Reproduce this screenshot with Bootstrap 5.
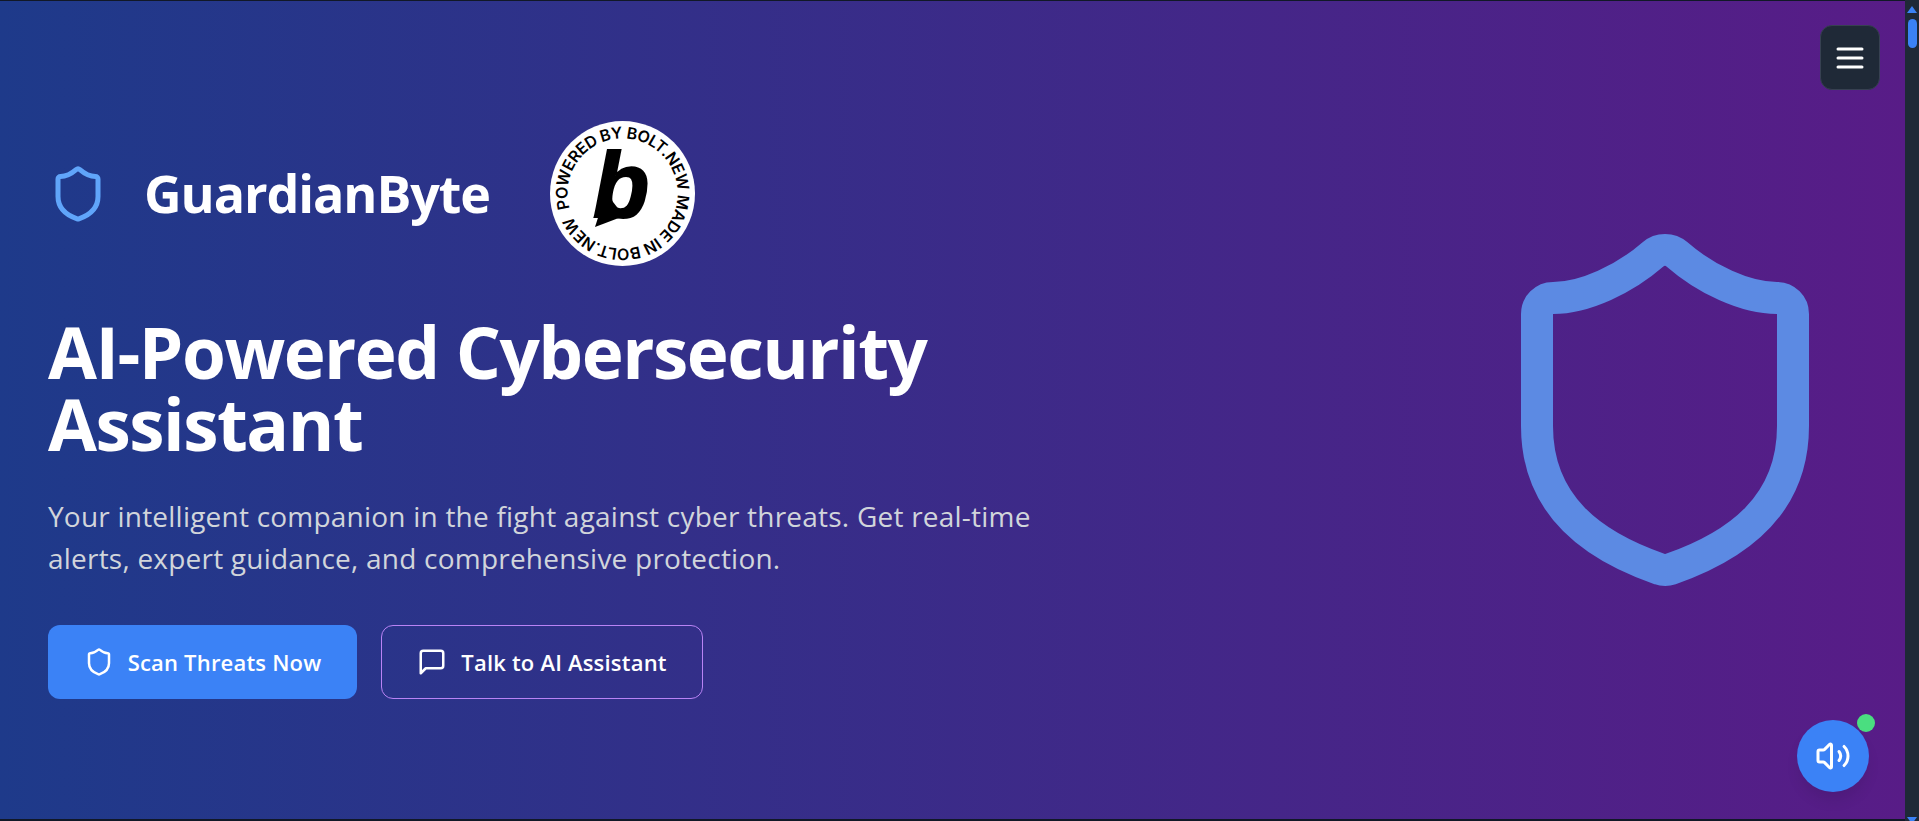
<!DOCTYPE html>
<html lang="en">
<head>
  <meta charset="UTF-8">
  <meta name="viewport" content="width=device-width, initial-scale=1">
  <title>GuardianByte</title>
  <link href="https://cdn.jsdelivr.net/npm/bootstrap@5.3.0/dist/css/bootstrap.min.css" rel="stylesheet">
  <style>
    body {
      font-family: "Open Sans", "Noto Sans", sans-serif;
      background-color: #111827;
      height: 821px;
      overflow: hidden;
      padding: 1px 0 2px;
    }
    .hero {
      background: linear-gradient(to right, #1e3a8a, #581c87);
      color: #fff;
      padding-left: 48px;
      padding-right: 48px;
    }
    .hero-copy { width: 1010px; }
    .logo-shield { width: 60px; height: 60px; color: #60a5fa; }
    .brand-name {
      font-size: 52px;
      font-weight: 700;
      letter-spacing: -1.1px;
      margin: 0 0 0 36px;
    }
    .bolt-badge { width: 145px; height: 145px; margin-left: 60px; }
    .bolt-badge .ring { font-family: Inter, "Liberation Sans", sans-serif; font-size: 16px; font-weight: 600; }
    .bolt-badge .mark { font-family: "Liberation Sans", sans-serif; font-size: 92px; font-weight: 700; font-style: italic; }
    .hero-title {
      font-size: 71px;
      line-height: 72px;
      font-weight: 700;
      letter-spacing: -1.5px;
      margin: 50px 0 35px;
    }
    .hero-text {
      font-size: 28px;
      line-height: 42px;
      letter-spacing: .22px;
      color: #d1d5db;
      margin-bottom: 46px;
    }
    .btn-scan, .btn-talk {
      height: 74px;
      border-radius: 12px;
      font-size: 22px;
      font-weight: 600;
      letter-spacing: .2px;
      color: #fff;
      gap: 14px;
    }
    .btn-scan { width: 309px; background-color: #3b82f6; border: 0; }
    .btn-talk { width: 322px; background-color: transparent; border: 1px solid #b983f5; }
    .btn-scan:hover { background-color: #2563eb; color: #fff; }
    .btn-talk:hover { background-color: rgba(168, 85, 247, .2); color: #fff; }
    .btn-scan svg, .btn-talk svg { width: 30px; height: 30px; }
    .big-shield { width: 384px; height: 384px; color: #5c8ae3; }
    .menu-btn {
      position: fixed;
      top: 25px;
      left: 1820px;
      width: 60px;
      height: 65px;
      background-color: #1f2937;
      border: 1px solid #374151;
      border-radius: 12px;
      color: #fff;
    }
    .menu-btn svg { width: 36px; height: 36px; }
    .sound-btn {
      position: fixed;
      left: 1797px;
      top: 720px;
      width: 72px;
      height: 72px;
      background-color: #3b82f6;
      border: 0;
      border-radius: 50%;
      color: #fff;
      box-shadow: 0 10px 15px -3px rgba(0, 0, 0, .1);
    }
    .sound-btn svg { width: 36px; height: 36px; }
    .sound-dot {
      position: absolute;
      top: -6px;
      right: -6px;
      width: 18px;
      height: 18px;
      border-radius: 50%;
      background-color: #4ade80;
    }
    .page-scroll { width: 14px; background-color: #1f2937; margin: -1px 0 -2px; overflow: hidden; }
    .page-scroll .arrow-up { width: 0; height: 0; border: 5px solid transparent; border-top: 0; border-bottom: 7px solid #3b82f6; margin: 6px auto 0; }
    .page-scroll .arrow-down { width: 0; height: 0; flex-shrink: 0; border: 5px solid transparent; border-bottom: 0; border-top: 7px solid #3b82f6; margin: auto auto -3px; }
    .page-scroll .thumb { width: 9px; height: 29px; border-radius: 5px; background-color: #3b82f6; margin: 6px auto 0; }
  </style>
</head>
<body>
  <div class="d-flex h-100">
    <main class="hero flex-grow-1 d-flex align-items-center justify-content-between">
      <div class="hero-copy">
        <div class="d-flex align-items-center">
          <svg class="logo-shield" viewBox="0 0 24 24" fill="none" stroke="currentColor" stroke-width="2" stroke-linecap="round" stroke-linejoin="round"><path d="M20 13c0 5-3.5 7.5-7.66 8.95a1 1 0 0 1-.67-.01C7.5 20.5 4 18 4 13V6a1 1 0 0 1 1-1c2 0 4.5-1.2 6.24-2.72a1.17 1.17 0 0 1 1.52 0C14.51 3.81 17 5 19 5a1 1 0 0 1 1 1z"/></svg>
          <h2 class="brand-name">GuardianByte</h2>
          <svg class="bolt-badge" viewBox="0 0 145 145">
            <circle cx="72.5" cy="72.5" r="72.5" fill="#fff"/>
            <defs><path id="ringPath" d="M19.6 87.7A55 55 0 1 1 125.4 57.3A55 55 0 1 1 19.6 87.7"/></defs>
            <text class="ring" fill="#000" textLength="338"><textPath href="#ringPath">POWERED BY BOLT.NEW MADE IN BOLT.NEW</textPath></text>
            <polygon points="45,106 56,72 74,95" fill="#000"/>
            <text class="mark" x="43" y="96" fill="#000" stroke="#000" stroke-width="2">b</text>
          </svg>
        </div>
        <h1 class="hero-title">AI-Powered Cybersecurity Assistant</h1>
        <p class="hero-text">Your intelligent companion in the fight against cyber threats. Get real-time alerts, expert guidance, and comprehensive protection.</p>
        <div class="d-flex gap-4">
          <a href="#" class="btn btn-scan d-flex align-items-center justify-content-center">
            <svg viewBox="0 0 24 24" fill="none" stroke="currentColor" stroke-width="2" stroke-linecap="round" stroke-linejoin="round"><path d="M20 13c0 5-3.5 7.5-7.66 8.95a1 1 0 0 1-.67-.01C7.5 20.5 4 18 4 13V6a1 1 0 0 1 1-1c2 0 4.5-1.2 6.24-2.72a1.17 1.17 0 0 1 1.52 0C14.51 3.81 17 5 19 5a1 1 0 0 1 1 1z"/></svg>
            Scan Threats Now
          </a>
          <a href="#" class="btn btn-talk d-flex align-items-center justify-content-center">
            <svg viewBox="0 0 24 24" fill="none" stroke="currentColor" stroke-width="2" stroke-linecap="round" stroke-linejoin="round"><path d="M21 15a2 2 0 0 1-2 2H7l-4 4V5a2 2 0 0 1 2-2h14a2 2 0 0 1 2 2z"/></svg>
            Talk to AI Assistant
          </a>
        </div>
      </div>
      <svg class="big-shield" viewBox="0 0 24 24" fill="none" stroke="currentColor" stroke-width="2" stroke-linecap="round" stroke-linejoin="round"><path d="M20 13c0 5-3.5 7.5-7.66 8.95a1 1 0 0 1-.67-.01C7.5 20.5 4 18 4 13V6a1 1 0 0 1 1-1c2 0 4.5-1.2 6.24-2.72a1.17 1.17 0 0 1 1.52 0C14.51 3.81 17 5 19 5a1 1 0 0 1 1 1z"/></svg>
    </main>
    <div class="page-scroll d-flex flex-column flex-shrink-0">
      <div class="arrow-up"></div>
      <div class="thumb"></div>
      <div class="arrow-down"></div>
    </div>
  </div>

  <button class="menu-btn d-flex align-items-center justify-content-center p-0" type="button" aria-label="Menu">
    <svg viewBox="0 0 24 24" fill="none" stroke="currentColor" stroke-width="2" stroke-linecap="round"><path d="M4 6h16M4 12h16M4 18h16"/></svg>
  </button>
  <button class="sound-btn d-flex align-items-center justify-content-center p-0" type="button" aria-label="Sound">
    <svg viewBox="0 0 24 24" fill="none" stroke="currentColor" stroke-width="2" stroke-linecap="round" stroke-linejoin="round"><path d="M11 4.702a.705.705 0 0 0-1.203-.498L6.413 7.587A1.4 1.4 0 0 1 5.416 8H3a1 1 0 0 0-1 1v6a1 1 0 0 0 1 1h2.416a1.4 1.4 0 0 1 .997.413l3.383 3.384A.705.705 0 0 0 11 19.298z"/><path d="M16 9a5 5 0 0 1 0 6"/><path d="M19.364 18.364a9 9 0 0 0 0-12.728"/></svg>
    <span class="sound-dot"></span>
  </button>
  <script src="https://cdn.jsdelivr.net/npm/bootstrap@5.3.0/dist/js/bootstrap.bundle.min.js"></script>
</body>
</html>
